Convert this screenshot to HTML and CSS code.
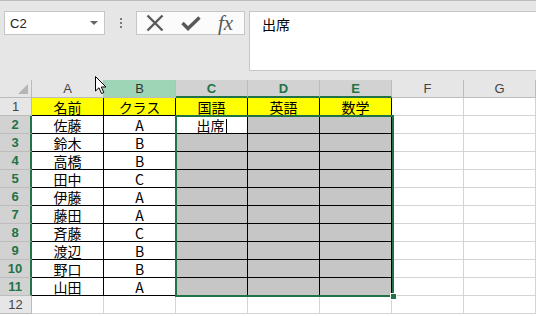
FILE: index.html
```html
<!DOCTYPE html>
<html>
<head>
    <link rel="stylesheet" href="styles.css">
    <title>Sheet1</title>
</head>
<body>
    <div class="toolbar">
        <div class="namebox">
            <span>C2</span>
            <span class="drop"></span>
        </div>
        <div class="grip"><i></i><i></i><i></i></div>
        <div class="fbtns">
            <svg class="ico" width="20" height="18" viewBox="0 0 20 18">
                <path d="M2.5 1.5 L17.5 16.5 M17.5 1.5 L2.5 16.5" stroke="#595959" stroke-width="2.4" fill="none"/>
            </svg>
            <svg class="ico" width="20" height="18" viewBox="0 0 20 18">
                <path d="M1.5 9 L7 14.5 L18.5 3.5" stroke="#595959" stroke-width="3.4" fill="none"/>
            </svg>
            <span class="fx">fx</span>
        </div>
        <div class="formula">出席</div>
    </div>

    <div class="sheet">
        <div class="grid">
            <!-- column headers -->
            <div class="corner"></div>
            <div class="ch">A</div>
            <div class="ch hover">B</div>
            <div class="ch sel">C</div>
            <div class="ch sel">D</div>
            <div class="ch sel">E</div>
            <div class="ch">F</div>
            <div class="ch">G</div>

            <!-- row 1 -->
            <div class="rh">1</div>
            <div class="c yl">名前</div>
            <div class="c yl">クラス</div>
            <div class="c yl">国語</div>
            <div class="c yl">英語</div>
            <div class="c yl">数学</div>
            <div class="c"></div>
            <div class="c"></div>

            <!-- row 2 -->
            <div class="rh sel">2</div>
            <div class="c bd">佐藤</div>
            <div class="c bd">A</div>
            <div class="c bd">出席<span class="caret"></span></div>
            <div class="c gr"></div>
            <div class="c gr"></div>
            <div class="c"></div>
            <div class="c"></div>

            <!-- row 3 -->
            <div class="rh sel">3</div>
            <div class="c bd">鈴木</div>
            <div class="c bd">B</div>
            <div class="c gr"></div>
            <div class="c gr"></div>
            <div class="c gr"></div>
            <div class="c"></div>
            <div class="c"></div>

            <!-- row 4 -->
            <div class="rh sel">4</div>
            <div class="c bd">高橋</div>
            <div class="c bd">B</div>
            <div class="c gr"></div>
            <div class="c gr"></div>
            <div class="c gr"></div>
            <div class="c"></div>
            <div class="c"></div>

            <!-- row 5 -->
            <div class="rh sel">5</div>
            <div class="c bd">田中</div>
            <div class="c bd">C</div>
            <div class="c gr"></div>
            <div class="c gr"></div>
            <div class="c gr"></div>
            <div class="c"></div>
            <div class="c"></div>

            <!-- row 6 -->
            <div class="rh sel">6</div>
            <div class="c bd">伊藤</div>
            <div class="c bd">A</div>
            <div class="c gr"></div>
            <div class="c gr"></div>
            <div class="c gr"></div>
            <div class="c"></div>
            <div class="c"></div>

            <!-- row 7 -->
            <div class="rh sel">7</div>
            <div class="c bd">藤田</div>
            <div class="c bd">A</div>
            <div class="c gr"></div>
            <div class="c gr"></div>
            <div class="c gr"></div>
            <div class="c"></div>
            <div class="c"></div>

            <!-- row 8 -->
            <div class="rh sel">8</div>
            <div class="c bd">斉藤</div>
            <div class="c bd">C</div>
            <div class="c gr"></div>
            <div class="c gr"></div>
            <div class="c gr"></div>
            <div class="c"></div>
            <div class="c"></div>

            <!-- row 9 -->
            <div class="rh sel">9</div>
            <div class="c bd">渡辺</div>
            <div class="c bd">B</div>
            <div class="c gr"></div>
            <div class="c gr"></div>
            <div class="c gr"></div>
            <div class="c"></div>
            <div class="c"></div>

            <!-- row 10 -->
            <div class="rh sel">10</div>
            <div class="c bd">野口</div>
            <div class="c bd">B</div>
            <div class="c gr"></div>
            <div class="c gr"></div>
            <div class="c gr"></div>
            <div class="c"></div>
            <div class="c"></div>

            <!-- row 11 -->
            <div class="rh sel">11</div>
            <div class="c bd">山田</div>
            <div class="c bd">A</div>
            <div class="c gr"></div>
            <div class="c gr"></div>
            <div class="c gr"></div>
            <div class="c"></div>
            <div class="c"></div>

            <!-- row 12 -->
            <div class="rh">12</div>
            <div class="c"></div>
            <div class="c"></div>
            <div class="c"></div>
            <div class="c"></div>
            <div class="c"></div>
            <div class="c"></div>
            <div class="c"></div>
        </div>

        <!-- selected range C2:E11 -->
        <div class="selection"><span class="handle"></span></div>

        <!-- mouse pointer -->
        <svg class="cursor" width="12" height="19" viewBox="0 0 12 19">
            <path d="M0.5 0.5 L0.5 15 L4 11.8 L6.5 17.5 L8.8 16.5 L6.3 11 L11 11 Z" fill="#fff" stroke="#000" stroke-width="1"/>
        </svg>
    </div>
</body>
</html>
```

FILE: styles.css
```css
* {
    margin: 0;
    padding: 0;
    box-sizing: border-box;
}

body {
    font-family: "Liberation Sans", Arial, sans-serif;
    background-color: #e6e6e6;
    width: 536px;
    height: 316px;
    overflow: hidden;
}

/* Formula bar */
.toolbar {
    height: 80px;
    border-top: 1px solid #bdbdbd;
    padding: 10px 0 0 4px;
    display: flex;
    align-items: flex-start;
}

.namebox {
    width: 101px;
    height: 24px;
    background-color: #fff;
    border: 1px solid #c6c6c6;
    padding-left: 5px;
    display: flex;
    align-items: center;
    justify-content: space-between;
    font-size: 13px;
    color: #222;
}

.drop {
    width: 0;
    height: 0;
    border-left: 4px solid transparent;
    border-right: 4px solid transparent;
    border-top: 4px solid #666;
    margin-right: 6px;
}

.grip {
    width: 31px;
    height: 24px;
    display: flex;
    flex-direction: column;
    align-items: center;
    justify-content: center;
    gap: 2px;
}

.grip i {
    display: block;
    width: 2px;
    height: 2px;
    background-color: #7a7a7a;
}

.fbtns {
    width: 109px;
    height: 24px;
    background-color: #fbfbfb;
    border: 1px solid #c6c6c6;
    display: flex;
    align-items: center;
    padding-left: 8px;
    gap: 16px;
}

.ico {
    display: block;
}

.fx {
    font-family: "Liberation Serif", "Times New Roman", serif;
    font-style: italic;
    font-size: 21px;
    color: #595959;
    line-height: 20px;
    margin-left: 1px;
}

.formula {
    flex: 1;
    height: 60px;
    margin-left: 4px;
    background-color: #fff;
    border: 1px solid #c6c6c6;
    border-right: none;
    padding: 4px 0 0 12px;
    font-family: "Noto Sans CJK JP", sans-serif;
    font-size: 14px;
    line-height: 17px;
    color: #000;
}

/* Sheet grid */
.sheet {
    position: relative;
    height: 236px;
    background-color: #fff;
}

.grid {
    display: grid;
    grid-template-columns: 32px repeat(7, 72px);
    grid-template-rows: repeat(13, 18px);
}

.corner {
    position: relative;
    background-color: #e6e6e6;
    border-right: 1px solid #bcbcbc;
    border-bottom: 1px solid #bcbcbc;
}

.corner::after {
    content: "";
    position: absolute;
    right: 3px;
    bottom: 3px;
    border-left: 10px solid transparent;
    border-bottom: 10px solid #b5b5b5;
}

.ch {
    background-color: #e6e6e6;
    border-right: 1px solid #bcbcbc;
    border-bottom: 1px solid #bcbcbc;
    text-align: center;
    font-size: 13px;
    line-height: 17px;
    color: #444;
}

.ch.hover {
    background-color: #9fd5b7;
    color: #333;
}

.ch.sel {
    background-color: #d2d2d2;
    border-bottom: 2px solid #217346;
    color: #217346;
    font-weight: bold;
}

.rh {
    background-color: #e6e6e6;
    border-right: 1px solid #bcbcbc;
    border-bottom: 1px solid #bcbcbc;
    text-align: center;
    font-size: 13px;
    line-height: 18px;
    color: #444;
}

.rh.sel {
    background-color: #d2d2d2;
    border-right: 2px solid #217346;
    color: #217346;
    font-weight: bold;
}

.c {
    border-right: 1px solid #d4d4d4;
    border-bottom: 1px solid #d4d4d4;
    padding-top: 1px;
    text-align: center;
    font-family: "Noto Sans CJK JP", sans-serif;
    font-size: 14px;
    line-height: 16px;
    color: #000;
}

.c.yl {
    background-color: #ffff00;
    border-color: #000;
}

.c.bd {
    background-color: #fff;
    border-color: #000;
}

.c.gr {
    background-color: #c6c6c6;
    border-color: #000;
}

.caret {
    display: inline-block;
    width: 1px;
    height: 15px;
    background-color: #000;
    vertical-align: -3px;
    margin-left: 1px;
}

/* Selection outline */
.selection {
    position: absolute;
    left: 175px;
    top: 35px;
    width: 219px;
    height: 182px;
    border: 2px solid #217346;
    pointer-events: none;
}

.handle {
    position: absolute;
    right: -5px;
    bottom: -5px;
    width: 7px;
    height: 7px;
    background-color: #217346;
    border: 1px solid #fff;
}

.cursor {
    position: absolute;
    left: 95px;
    top: -4px;
}
```
